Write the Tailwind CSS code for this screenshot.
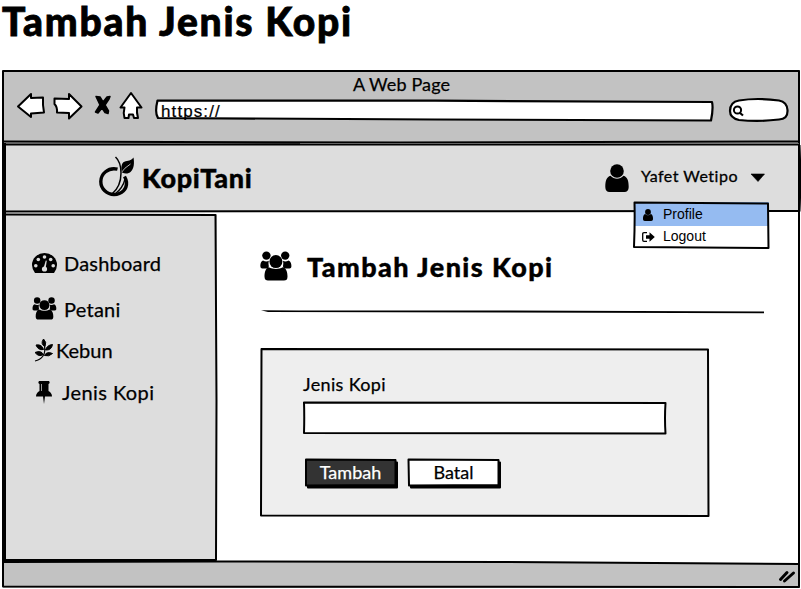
<!DOCTYPE html>
<html lang="id">
<head>
<meta charset="utf-8">
<title>Tambah Jenis Kopi</title>
<script src="https://cdn.jsdelivr.net/npm/@tailwindcss/browser@4"></script>
</head>
<body class="h-[589px] w-[801px] overflow-hidden bg-white font-['Lato',sans-serif] text-black">
<svg class="hidden">
  <symbol id="users" viewBox="0 0 32 30">
    <circle cx="6.4" cy="4.6" r="4.2"/><circle cx="25.2" cy="4.6" r="4.2"/>
    <path d="M3 9.500C.7 10.300.3 13.500.4 15.500C.6 17.500 2 17.500 3.500 17.500H7C8 17.500 8.800 16.500 8.800 15C8.300 12.500 8.500 11 8.900 9.700C7 10.800 5 10.500 3 9.500Z"/>
    <path d="M28.600 9.500C30.900 10.300 31.500 13.500 31.400 15.500C31.200 17.500 29.800 17.500 28.300 17.500H24.800C23.800 17.500 23 16.500 23 15C23.500 12.500 23.300 11 22.900 9.700C24.600 10.800 26.600 10.500 28.600 9.500Z"/>
    <circle cx="15.900" cy="10.600" r="6.500"/>
    <path d="M8.800 16.200C5.500 17.500 4.500 21 4.500 25.500C4.500 28.500 6 29.500 8 29.500H24C26.300 29.500 27.500 28.500 27.500 25.500C27.500 21 26.500 17.500 22.800 16.200C19 18.500 13 18.500 8.800 16.200Z"/>
  </symbol>
  <symbol id="user" viewBox="0 0 24 28">
    <circle cx="12" cy="7" r="6.800"/>
    <path d="M5.500 11.800C1.500 13 .3 17 .3 23C.3 26.500 2 28 4.500 28H19.500C22 28 23.700 26.500 23.700 23C23.700 17 22.500 13 18.500 11.800C15 15.600 9 15.600 5.500 11.800Z"/>
  </symbol>
</svg>

<h1 class="h-[70px] pl-[2px] text-[39px] leading-[42px] font-black tracking-[1.75px] whitespace-nowrap [-webkit-text-stroke:0.8px_black]">Tambah Jenis Kopi</h1>

<div class="relative ml-[3px] flex h-[518px] w-[797px] flex-col">
  <header class="h-[74px] bg-[#c2c2c2]">
    <div class="h-[29px] text-center text-[18px] leading-[29px] tracking-[0.13px] [-webkit-text-stroke:0.25px_black]">A Web Page</div>
    <div class="flex h-[24px]">
      <svg class="h-[29px] w-[152px] shrink-0 -mt-[8px]" viewBox="3 91 152 29" fill="#fff" stroke="#000" stroke-width="2" stroke-linejoin="round">
        <path d="M18 106.500L31 94V98L43 97.500Q42.500 105 44 112.500L31 113.500V117Z"/>
        <path d="M54.500 98.500L69 99V94L81.500 106.500L69 118.500V113L57 112.500Q57.500 107 54.500 104Z"/>
        <path fill="#000" stroke-width="1.500" d="M96 96.500L100 97L103 102L107 97L110 96.500L109 99L105 105L108.500 111L108 113.500L105 112.500L102 108L98 113L95.500 112L100 105Z"/>
        <path d="M131 93L120.500 107.500H124.500Q123 113 124.500 118H128.500L129 114.500H133L134 118H138Q136.500 112 137 107.500H141.500Z"/>
      </svg>
      <div class="relative h-[20px] w-[559px]">
        <svg class="absolute inset-0 h-[24px] w-[559px] overflow-visible" fill="#fff" stroke="#000" stroke-width="2.200" stroke-linejoin="round"><path d="M2.500 1.500L280 1.700L557 3Q558.500 9 556 21.500L280 20.500L3 19Q-.5 14 2.500 1.500Z"/></svg>
        <span class="relative ml-[6px] block w-[80px] text-[17px] leading-[26px] font-normal tracking-[1.1px] font-['Liberation_Sans',sans-serif] [-webkit-text-stroke:0.2px_black]">https://</span>
      </div>
      <svg class="ml-[15px] h-[24px] w-[60px] overflow-visible" fill="#fff" stroke="#000" stroke-width="2.200"><path d="M10 1.500Q28-1.500 50 1.500Q58 3 58.500 11Q59 20 50 20.500Q30 23 10 21Q1 19 1 12Q1 3 10 1.500Z"/><circle cx="8.500" cy="11" r="3.600" stroke-width="2"/><path d="M10.500 13.500L14 16.500"/></svg>
    </div>
  </header>

  <nav class="flex h-[68px] items-center bg-[#ddd]">
    <svg class="-mt-[4px] ml-[95px] h-[42px] w-[38px] shrink-0" viewBox="98 155 38 42">
      <path fill="none" stroke="#000" stroke-width="3.400" d="M117.500 169.200C108 167 100.800 174 100.800 181.500C100.800 189 107 194.500 114 194.500C122 194.500 127 189 126.500 182Q126 179 124.500 176.500"/>
      <path d="M121.500 170C121 163.500 123 161.500 127 161C130.500 160.500 132 159.500 133.500 157.500C134.500 163 134 168.500 131 171.500C128.500 174 125 174 122 172.500Z"/>
      <path fill="none" stroke="#ddd" stroke-width=".8" d="M121 173Q124 168 130.500 164"/>
      <path fill="none" stroke="#000" stroke-width="1.500" d="M115.500 157Q121 162 121 173C121 183 118 189 112 194"/>
      <path fill="none" stroke="#000" stroke-width="1.300" d="M125 179Q123 188 115 194"/>
    </svg>
    <span class="-mt-[2px] ml-[6px] w-[150px] text-[27px] font-black leading-none tracking-[0.65px] [-webkit-text-stroke:0.4px_black]">KopiTani</span>
    <svg class="ml-[313px] -mt-[1px] h-[28px] w-[24px] shrink-0"><use href="#user"/></svg>
    <span class="-mt-[5px] ml-[12px] shrink-0 text-[16px] whitespace-nowrap tracking-[0.49px] [-webkit-text-stroke:0.3px_black]">Yafet Wetipo</span>
    <svg class="ml-[12px] -mt-[1px] h-[9px] w-[16px] shrink-0"><path d="M1 1H14.500L8 8.500Z" stroke="#000" stroke-width=".6" stroke-linejoin="round"/></svg>
  </nav>

  <div class="flex h-[349px] bg-white">
    <aside class="mt-[2px] ml-[2px] h-[347px] w-[212px] shrink-0 bg-[#ddd] pt-[36px] text-[20px] leading-[26px] [-webkit-text-stroke:0.25px_black]">
      <div class="flex h-[46px] items-start pl-[27px]">
        <svg class="mt-[3px] mr-[7px] h-[21px] w-[25px]" viewBox="0 0 25 21"><path d="M3 20Q0 16 0 12A12.500 12 0 0 1 25 12Q25 16 22 20Z"/><g fill="#ddd"><circle cx="12.500" cy="4" r="1.800"/><circle cx="6.300" cy="6.500" r="1.800"/><circle cx="18.700" cy="6.500" r="1.800"/><circle cx="3.800" cy="12.700" r="1.800"/><circle cx="21.200" cy="12.700" r="1.800"/><circle cx="12.500" cy="16" r="2.600"/><path d="M11.500 15L13.800 7.500L14.800 7.800L13.500 16Z"/></g></svg>
        <span class="tracking-[0.22px]">Dashboard</span>
      </div>
      <div class="flex h-[41px] items-start pl-[27px]">
        <svg class="mt-[1px] mr-[7px] h-[23px] w-[25px]"><use href="#users"/></svg>
        <span class="tracking-[0.25px]">Petani</span>
      </div>
      <div class="flex h-[42px] items-start pl-[29px]">
        <svg class="mt-[1px] mr-[2px] h-[25px] w-[20px]" viewBox="0 0 20 25"><path fill="none" stroke="#000" stroke-width="1.200" d="M10 5Q12 14 9 18Q6 22 1 23"/><path stroke="#000" stroke-width="1" stroke-linejoin="round" d="M9.500 1Q13 4 11 8.500Q6 6 9.500 1ZM2 7Q8 6 9.500 11.500Q4 12.500 2 7ZM18.500 6.500Q17.500 12.500 11.500 12Q13 7 18.500 6.500ZM1 14.500Q7 12 9.500 16.500Q5 19.500 1 14.500ZM18.500 15.500Q15 19 10.500 17.500Q12.500 13 18.500 15.500Z"/></svg>
        <span>Kebun</span>
      </div>
      <div class="flex items-start pl-[31px]">
        <svg class="mt-[2px] mr-[10px] h-[23px] w-[16px]" viewBox="0 0 16 23"><path d="M3 0H13Q14.500 2 12.500 3V10Q16 12 16 15.500H9L8 23L7 15.500H0Q0 12 3.500 10V3Q1.500 2 3 0Z"/><path d="M5.500 3V10" stroke="#999" stroke-width="1"/></svg>
        <span class="tracking-[0.42px]">Jenis Kopi</span>
      </div>
    </aside>

    <main class="pt-[39px] pl-[43px]">
      <div class="flex h-[59px] items-start">
        <svg class="h-[30px] w-[32px]"><use href="#users"/></svg>
        <h2 class="ml-[15px] text-[27px] leading-[32px] font-black whitespace-nowrap tracking-[1.42px] [-webkit-text-stroke:0.4px_black]">Tambah Jenis Kopi</h2>
      </div>
      <svg class="block h-[4px] w-[506px]"><path d="M1 .2Q60 .5 250 .6L504 1.500V3.200L250 2.500L8 2Z"/></svg>
      <section class="relative mt-[34px] h-[168px] w-[449px] pt-[24px] pl-[43px]">
        <svg class="absolute inset-0 h-[168px] w-[449px] overflow-visible" fill="#eee" stroke="#000" stroke-width="2" stroke-linejoin="round"><path d="M1.500 1L448 1.500L448.500 168L1 167.500Z"/></svg>
        <label class="relative block h-[30px] text-[18px] leading-[25px] tracking-[0.35px] [-webkit-text-stroke:0.25px_black]">Jenis Kopi</label>
        <div class="relative h-[33px] w-[364px]"><svg class="absolute inset-0 h-[33px] w-[364px] overflow-visible" fill="#fff" stroke="#000" stroke-width="2" stroke-linejoin="round"><path d="M1 .5L362.500 1Q361.500 16 362.500 31.500L1 31Q1.500 14 1 .5Z"/></svg></div>
        <div class="relative mt-[24px] flex gap-[10px] text-center text-[18px] leading-[24px] [-webkit-text-stroke-width:0.25px]">
          <button class="relative ml-[1px] h-[28px] w-[93px] pb-[2px] text-white"><svg class="absolute inset-0 h-[30px] w-[95px] overflow-visible" stroke="#000" stroke-width="2" stroke-linejoin="round"><path d="M4 3.500H93V28.500H4Z"/><path fill="#333" d="M2 .5L91.500 1V26L2 26.500Z"/></svg><span class="relative">Tambah</span></button>
          <button class="relative h-[28px] w-[93px] pb-[2px]"><svg class="absolute inset-0 h-[30px] w-[95px] overflow-visible" stroke="#000" stroke-width="2" stroke-linejoin="round"><path d="M4 3.500H93V28.500H4Z"/><path fill="#fff" d="M1.500 .5L91.500 1V26L2 26.500Z"/></svg><span class="relative">Batal</span></button>
        </div>
      </section>
    </main>
  </div>
  <footer class="h-[27px] bg-[#c2c2c2]"></footer>

  <svg class="pointer-events-none absolute top-0 left-0 h-[518px] w-[797px] overflow-visible" viewBox="3 70 797 518" fill="none" stroke="#000" stroke-width="2" stroke-linejoin="round">
    <path stroke="none" fill="#fff" d="M218 558H799V563.500L500 561.500H218Z"/>
    <path d="M3 71H799V587L3 586.500Z"/>
    <path d="M4 141.500L400 142.500L799 141.500M4 144.500L799 144.500"/>
    <path stroke="#777" stroke-width=".8" d="M300 143.500H799"/>
    <path stroke-width="3" d="M4.500 143V561"/>
    <path d="M799.500 145Q801 180 799.500 211L4 211.500"/>
    <path d="M5 214.500L215.500 215L216.500 400L216 560H5"/>
    <path d="M4 562L217 561.500L500 562L799 564"/>
    <path stroke-width="3" stroke-linecap="round" d="M780.500 579.500L787 572.500M784.500 581L793.500 573"/>
  </svg>

  <div class="absolute top-[132px] left-[631px] h-[46px] w-[135px] bg-[#95bbf1] text-[14px] font-['Liberation_Sans',sans-serif]">
    <div class="flex h-[24px] items-center pl-[8px]"><svg class="mt-[1px] h-[12px] w-[12px]"><use href="#user"/></svg><span class="ml-[9px] leading-[22px]">Profile</span></div>
    <div class="flex h-[22px] items-center bg-white pl-[8px]"><svg class="h-[10px] w-[13px]" viewBox="0 0 13 10"><path fill="none" stroke="#000" stroke-width="1.300" d="M5 .7H2Q.7 .7 .7 2V8Q.7 9.300 2 9.300H5"/><path d="M4 3.300H7.500V.2L12.800 5L7.500 9.800V6.700H4Z"/></svg><span class="-mt-[2px] ml-[8px] leading-[20px]">Logout</span></div>
    <svg class="absolute inset-0 h-[46px] w-[135px] overflow-visible" fill="none" stroke="#000" stroke-width="2" stroke-linejoin="round"><path d="M.5 .5L134 1.500L134.500 46L0 45Q1 20 .5 .5Z"/></svg>
  </div>
</div>
</body>
</html>
